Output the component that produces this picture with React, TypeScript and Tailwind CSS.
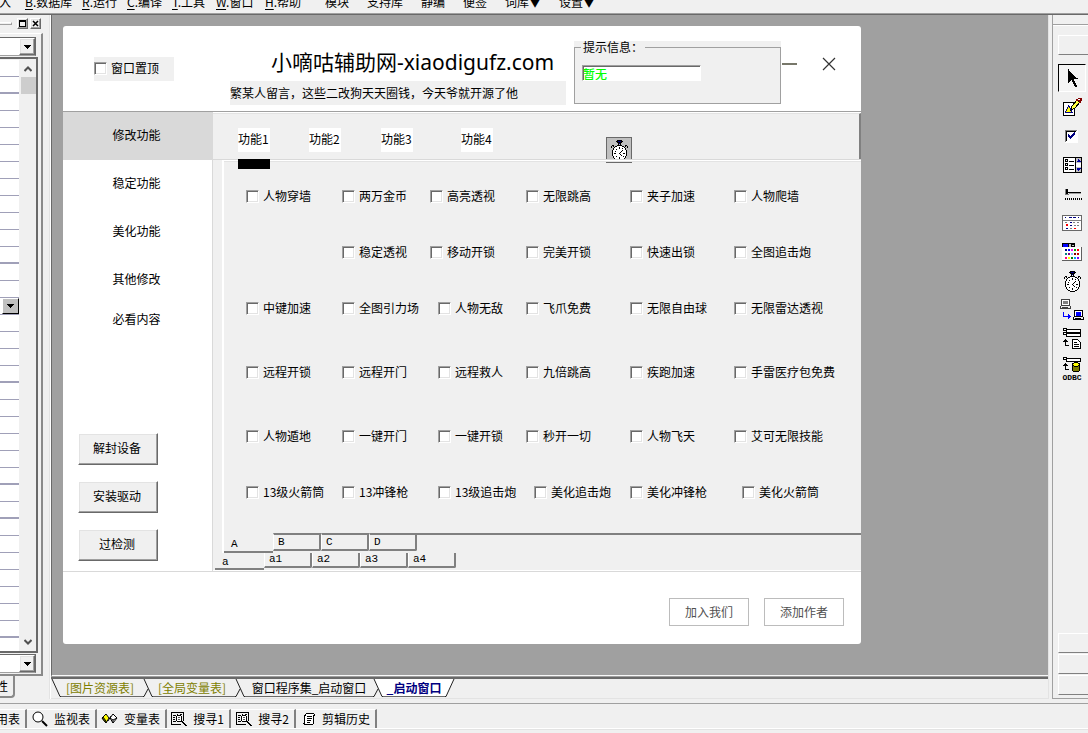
import React, { useState } from "react";

const RAISED =
  "border border-t-white border-l-white border-b-[#696969] border-r-[#696969] shadow-[inset_-1px_-1px_#a0a0a0,inset_1px_1px_#e3e3e3]";

/* ---------- menu ---------- */

const MENU = [
  { key: "I", label: "插入", width: "w-[45px]" },
  { key: "B", label: "数据库", width: "w-[57px]" },
  { key: "R", label: "运行", width: "w-[45px]" },
  { key: "C", label: "编译", width: "w-[45px]" },
  { key: "T", label: "工具", width: "w-[44px]" },
  { key: "W", label: "窗口", width: "w-[49px]" },
  { key: "H", label: "帮助", width: "w-[60px]" },
  { key: "", label: "模块", width: "w-[42px]" },
  { key: "", label: "支持库", width: "w-[54px]" },
  { key: "", label: "静编", width: "w-[42px]" },
  { key: "", label: "便签", width: "w-[42px]" },
  { key: "", label: "词库▼", width: "w-[54px]" },
  { key: "", label: "设置▼", width: "w-[54px]" },
];

function MenuBar() {
  return (
    <nav className="flex h-[15px] shrink-0 items-end overflow-hidden border-b border-[#696969] shadow-[inset_0_-1px_#a0a0a0]">
      <div className="-ml-5 flex pb-1">
        {MENU.map((m) => (
          <button key={m.label} type="button" className={`shrink-0 whitespace-nowrap text-left leading-4 ${m.width}`}>
            {m.key && (
              <>
                <span className="underline underline-offset-2">{m.key}</span>.
              </>
            )}
            {m.label}
          </button>
        ))}
      </div>
    </nav>
  );
}

/* ---------- property panel ---------- */

function DownArrow() {
  return (
    <svg width="7" height="4" viewBox="0 0 7 4" shapeRendering="crispEdges" aria-hidden="true">
      <path d="M0 0h7v1H0zM1 1h5v1H1zM2 2h3v1H2zM3 3h1v1H3z" />
    </svg>
  );
}

function Combo({ label }: { label: string }) {
  return (
    <div className="flex h-[19px] justify-end border-y border-r border-t-[#696969] border-r-[#696969] border-b-[#a0a0a0] bg-white">
      <button type="button" aria-label={label} className={`grid w-4 place-items-center bg-[#f0f0f0] ${RAISED}`}>
        <DownArrow />
      </button>
    </div>
  );
}

const THICK_ROWS = [1, 11, 18, 24, 26, 33];
const ROWS = Array.from({ length: 34 }, (_, i) => i);

function PropertyPanel() {
  return (
    <aside className="flex w-[50px] shrink-0 flex-col border-r border-[#e3e3e3] pr-[6px]">
      <div className="flex h-[18px] items-center justify-end gap-[2px] pr-[2px] pb-px">
        <span className="mr-[3px] h-[3px] flex-1 border border-l-0 border-t-white border-r-[#a0a0a0] border-b-[#a0a0a0]" />
        <button type="button" aria-label="最大化" className={`grid size-[11px] place-items-center ${RAISED}`}>
          <svg width="7" height="7" viewBox="0 0 7 7" shapeRendering="crispEdges" aria-hidden="true">
            <path fillRule="evenodd" d="M0 0h7v7H0zM1 2h5v4H1z" />
          </svg>
        </button>
        <button type="button" aria-label="关闭面板" className={`grid size-[11px] place-items-center ${RAISED}`}>
          <svg width="7" height="7" viewBox="0 0 7 7" aria-hidden="true">
            <path d="M1 1l5 5M6 1L1 6" stroke="black" strokeWidth="1.5" />
          </svg>
        </button>
      </div>
      <div className="flex flex-1 flex-col border-r-2 border-b-2 border-[#8a8a8a] border-t border-t-white pt-[3px] pr-[5px] pb-[1px]">
        <Combo label="选择组件" />
        <div className="mt-[1px] -mr-[2px] flex flex-1 border-t-2 border-r-2 border-b-2 border-[#696969] bg-[#f0f0f0] pt-[1px]">
          <div className="w-[19px] bg-white">
            {ROWS.map((i) => (
              <div
                key={i}
                className={`flex h-[17px] justify-end border-[#a0a0b8] ${THICK_ROWS.includes(i) ? "border-b-2" : "border-b"}`}
              >
                {i === 14 && (
                  <button
                    type="button"
                    aria-label="展开属性"
                    className="grid w-[17px] place-items-center border border-t-white border-l-white border-r-black border-b-black bg-[#c0c0c0]"
                  >
                    <DownArrow />
                  </button>
                )}
              </div>
            ))}
          </div>
          <div className="ml-[1px] flex flex-1 flex-col items-center justify-between">
            <div className="flex w-full flex-col items-center">
              <svg className="h-[17px]" width="8" viewBox="0 0 8 17" fill="none" stroke="#505050" strokeWidth="2" aria-hidden="true">
                <path d="M0.5 11L4 7.5 7.5 11" />
              </svg>
              <span className="h-[17px] w-[15px] bg-[#cdcdcd]" />
            </div>
            <svg className="h-[17px]" width="8" viewBox="0 0 8 17" fill="none" stroke="#505050" strokeWidth="2" aria-hidden="true">
              <path d="M0.5 6L4 9.5 7.5 6" />
            </svg>
          </div>
        </div>
        <div className="mt-[1px]">
          <Combo label="选择事件" />
        </div>
      </div>
      <div className="h-[23px]">
        <button
          type="button"
          className="h-[22px] w-[15px] overflow-hidden rounded-br-sm border-r-2 border-b-2 border-[#8a8a8a]"
        >
          <span className="-ml-[28px] block w-9 whitespace-nowrap text-right">属性</span>
        </button>
      </div>
    </aside>
  );
}

/* ---------- form being designed ---------- */

function Check({ label }: { label: string }) {
  return (
    <label className="flex h-6 items-center gap-1 whitespace-nowrap">
      <input
        type="checkbox"
        className="size-[13px] shrink-0 appearance-none border border-t-[#a0a0a0] border-l-[#a0a0a0] border-r-white border-b-white bg-white shadow-[inset_1px_1px_#696969,inset_-1px_-1px_#e3e3e3] checked:bg-[#000080]"
      />
      {label}
    </label>
  );
}

function Stopwatch() {
  return (
    <g>
      <path d="M10 4h5v1h-5zM9 5h2v1H9zM14 5h2v1h-2zM10 6h5v1h-5zM11 7h1v2h-1zM13 7h1v2h-1z" fill="#000" />
      <path d="M11 5h3v1h-3zM12 7h1v1h-1z" fill="#000080" />
      <path d="M5 9h2v1H5zM4 10h1v2H4zM6 10h1v1H6zM18 9h2v1h-2zM20 10h1v2h-1zM18 10h1v1h-1z" fill="#000" />
      <path d="M10 9h5v1h2v1h1v1h1v2h1v6h-1v2h-1v1h-1v1h-2v1h-5v-1H8v-1H7v-1H6v-2H5v-6h1v-2h1v-1h1v-1h2z" fill="#000" />
      <path d="M10 10h5v1h2v1h1v2h1v6h-1v2h-1v1h-2v1h-5v-1H8v-1H7v-2H6v-6h1v-2h1v-1h2z" fill="#fff" />
      <path d="M12 11h1v2h-1zM12 21h1v2h-1zM7 17h2v1H7zM16 17h2v1h-2zM9 13h1v1H9zM9 20h1v1H9zM16 20h1v1h-1zM8 15h1v1H8zM15 12h1v1h-1z" fill="#000" />
      <path d="M15 14h1v1h-1zM14 15h1v1h-1zM13 16h1v1h-1zM12 17h1v1h-1zM13 18h1v1h-1zM14 19h1v1h-1z" fill="#000" />
    </g>
  );
}

function FormHeader() {
  return (
    <header className="flex h-[86px] items-start border-b border-[#a0a0a0] pr-[25px] pl-[31px]">
      <div className="mt-[31px] w-20 bg-[#f0f0f0] pb-px">
        <div className="-mt-px">
          <Check label="窗口置顶" />
        </div>
      </div>
      <div className="mr-2 ml-14 min-w-0 flex-1 pt-5">
        <h1 className="h-[35px] whitespace-nowrap pl-[41px] font-['Noto_Sans','Noto_Sans_CJK_SC',sans-serif] text-[21px] leading-8">
          小嘀咕辅助网-xiaodigufz.com
        </h1>
        <p className="h-6 whitespace-nowrap bg-[#f0f0f0] leading-6">繁某人留言，这些二改狗天天圈钱，今天爷就开源了他</p>
      </div>
      <div className="mt-[15px] w-[207px] bg-[#f0f0f0]">
        <fieldset className="h-[63px] min-w-0 border border-[#a0a0a0] px-[7px]">
          <legend className="-ml-[1px] h-3 px-[2px] leading-3">提示信息：</legend>
          <input
            type="text"
            aria-label="提示信息"
            defaultValue="暂无"
            className="mt-3 block h-4 w-[119px] border border-t-[#a0a0a0] border-l-[#a0a0a0] border-r-white border-b-white bg-white leading-3 font-medium text-[#00ff00] shadow-[inset_1px_1px_#696969] outline-none"
          />
        </fieldset>
      </div>
      <button type="button" aria-label="最小化" className="mt-[26px] ml-px grid h-6 w-[15px] place-items-center">
        <span className="h-[2px] w-full bg-[#77776a]" />
      </button>
      <button type="button" aria-label="关闭" className="mt-[26px] ml-[25px] grid h-6 w-[14px] place-items-center">
        <svg width="14" height="14" viewBox="0 0 14 14" stroke="#333" strokeWidth="1.2" aria-hidden="true">
          <path d="M1 1l12 12M13 1L1 13" />
        </svg>
      </button>
    </header>
  );
}

const SIDE = [
  { label: "修改功能", height: "h-12" },
  { label: "稳定功能", height: "h-12" },
  { label: "美化功能", height: "h-12" },
  { label: "其他修改", height: "h-12" },
  { label: "必看内容", height: "h-8" },
];

function Sidebar() {
  const [active, setActive] = useState(0);
  return (
    <div className="flex w-[150px] shrink-0 flex-col border-r border-[#d9d9d9]">
      {SIDE.map((s, i) => (
        <button
          key={s.label}
          type="button"
          onClick={() => setActive(i)}
          className={`pr-0.5 pb-0.5 ${s.height} ${active === i ? "bg-[#d9d9d9]" : "bg-white"}`}
        >
          {s.label}
        </button>
      ))}
      <div className="mt-auto flex flex-col gap-4 pb-[10px] pl-[15px]">
        {["解封设备", "安装驱动", "过检测"].map((t) => (
          <button key={t} type="button" className={`h-8 w-20 bg-[#f0f0f0] pr-0.5 pb-0.5 ${RAISED}`}>
            {t}
          </button>
        ))}
      </div>
    </div>
  );
}

const TABS = [
  { label: "功能1", gap: "ml-[25px]" },
  { label: "功能2", gap: "ml-[39px]" },
  { label: "功能3", gap: "ml-10" },
  { label: "功能4", gap: "ml-12" },
];

type Item = { label: string; shifted?: boolean } | null;
const s = (label: string): Item => ({ label, shifted: true });
const n = (label: string): Item => ({ label });

const OPTIONS: { gap: string; items: Item[] }[] = [
  { gap: "", items: [n("人物穿墙"), n("两万金币"), n("高亮透视"), n("无限跳高"), n("夹子加速"), n("人物爬墙")] },
  { gap: "mt-8", items: [null, n("稳定透视"), n("移动开锁"), n("完美开锁"), n("快速出锁"), n("全图追击炮")] },
  { gap: "mt-8", items: [n("中键加速"), n("全图引力场"), s("人物无敌"), n("飞爪免费"), n("无限自由球"), n("无限雷达透视")] },
  { gap: "mt-10", items: [n("远程开锁"), n("远程开门"), s("远程救人"), n("九倍跳高"), n("疾跑加速"), n("手雷医疗包免费")] },
  { gap: "mt-10", items: [n("人物遁地"), n("一键开门"), s("一键开锁"), n("秒开一切"), n("人物飞天"), n("艾可无限技能")] },
  { gap: "mt-8", items: [n("13级火箭筒"), n("13冲锋枪"), s("13级追击炮"), s("美化追击炮"), n("美化冲锋枪"), s("美化火箭筒")] },
];

function PageTabs({ labels, fill }: { labels: string[]; fill?: boolean }) {
  return (
    <div className="flex items-start font-['Liberation_Mono','Noto_Sans_CJK_SC',monospace] text-[11px]">
      {labels.map((l, i) =>
        i === 0 ? (
          <button
            key={l}
            type="button"
            className={`w-[49px] border-b-2 border-[#808080] pl-[7px] text-left leading-4 ${fill ? "h-[20px] pt-[3px]" : "h-[17px] pt-[1px]"}`}
          >
            {l}
          </button>
        ) : (
          <button
            key={l}
            type="button"
            className={`w-12 rounded-br-[2px] border-r-2 border-b-2 border-l border-[#808080] border-l-white pl-1 text-left ${fill ? "h-[18px] border-t-2 leading-[15px]" : "h-[15px] leading-[13px]"}`}
          >
            {l}
          </button>
        ),
      )}
      {fill && <span className="flex-1 border-t-2 border-[#808080]" />}
    </div>
  );
}

function FormBody() {
  const [tab, setTab] = useState(0);
  return (
    <div className="flex">
      <Sidebar />
      <div className="flex min-w-0 flex-1 flex-col border-t border-white bg-[#f0f0f0]">
        <div className="flex h-[46px] items-start border-t border-r-2 border-[#e3e3e3] border-r-[#808080]">
          {TABS.map((t, i) => (
            <button
              key={t.label}
              type="button"
              onClick={() => setTab(i)}
              className={`relative mt-[14px] h-6 w-8 shrink-0 whitespace-nowrap bg-white pb-0.5 text-left ${t.gap}`}
            >
              {t.label}
              {tab === i && <span className="absolute top-[31px] left-0 h-[10px] w-8 bg-black" />}
            </button>
          ))}
          <span className="mt-[23px] ml-[113px] block size-[26px] shrink-0 border border-[#696969] bg-[#c0c0c0]">
            <svg width="24" height="24" viewBox="0 2 24 24" shapeRendering="crispEdges" role="img" aria-label="时钟">
              <Stopwatch />
            </svg>
          </span>
        </div>
        <div className="flex flex-col border-t border-[#d9d9d9] pl-[9px]">
          <div className="border-t border-l-2 border-white">
            <div className="h-[372px] border-t border-[#e3e3e3] pt-[22px] pl-[22px]">
              {OPTIONS.map((row, r) => (
                <div key={r} className={`grid grid-cols-[96px_88px_96px_104px_104px_1fr] ${row.gap}`}>
                  {row.items.map((it, c) => (
                    <div key={c} className={it && it.shifted ? "pl-2" : ""}>
                      {it && <Check label={it.label} />}
                    </div>
                  ))}
                </div>
              ))}
            </div>
            <PageTabs labels={["A", "B", "C", "D"]} fill />
          </div>
        </div>
        <div className="border-b border-white pl-[2px]">
          <PageTabs labels={["a", "a1", "a2", "a3", "a4"]} />
        </div>
      </div>
    </div>
  );
}

function DesignedForm() {
  return (
    <section className="w-full max-w-[798px] overflow-hidden rounded-[3px] bg-white">
      <FormHeader />
      <FormBody />
      <footer className="flex justify-end gap-[15px] border-t border-[#d9d9d9] pt-[26px] pr-[17px] pb-[18px]">
        {["加入我们", "添加作者"].map((t) => (
          <button key={t} type="button" className="h-7 w-20 border border-[#bcbcbc] bg-white text-[#505050]">
            {t}
          </button>
        ))}
      </footer>
    </section>
  );
}

/* ---------- document tabs ---------- */

function Slant({ fill, joined }: { fill: string; joined: boolean }) {
  return (
    <svg width="10" height="18" viewBox="0 0 10 18" className="shrink-0" fill="none" aria-hidden="true">
      <path d="M1 0L9 17.5H10V0z" fill={fill} />
      {joined && <path d="M5 10L1 17.5H0" stroke="#222" />}
      <path d="M1 0L9 17.5h1" stroke="#222" />
    </svg>
  );
}

const DOCS = [
  { label: "[图片资源表]", style: "w-[82px] pr-1 text-[#808000]" },
  { label: "[全局变量表]", style: "w-[82px] pr-1 text-[#808000]" },
  { label: "窗口程序集_启动窗口", style: "w-[128px] text-black" },
  { label: "_启动窗口", style: "w-[62px] bg-white font-bold text-[#000080]" },
];

function DocTabs() {
  return (
    <div className="flex h-[22px] items-start border-t-2 border-b border-[#696969] border-b-[#e3e3e3] shadow-[0_-1px_#a0a0a0]">
      {DOCS.map((d, i) => (
        <React.Fragment key={d.label}>
          <Slant fill={i === 3 ? "#fff" : "#f0f0f0"} joined={i > 0} />
          <button type="button" className={`h-[18px] border-b border-[#696969] text-center leading-4 whitespace-nowrap ${d.style}`}>
            {d.label}
          </button>
        </React.Fragment>
      ))}
      <svg width="10" height="18" viewBox="0 0 10 18" aria-hidden="true">
        <path d="M0 0H9L1 17.5H0z" fill="#fff" />
        <path d="M9 0L1 17.5H0" fill="none" stroke="#222" />
      </svg>
    </div>
  );
}

/* ---------- component toolbox ---------- */

const PALETTE = [
  "#000080", "#0000ff", "#ff00ff", "#00a000", "#ff0000",
  "#008080", "#800080", "#80c0ff", "#800000", "#c00000",
  "#ff0080", "#ffff00", "#008000", "#00a0ff", "#8000ff",
];

const TOOLS: { name: string; art: React.ReactNode }[] = [
  {
    name: "图片框",
    art: (
      <>
        <rect x="3.5" y="9.5" width="11" height="13" fill="#fff" stroke="#000" />
        <path d="M8.5 12.5l-3 7h7z" fill="#ffff00" stroke="#000080" />
        <path d="M11 17l1-4 5-6 3 2-5 6z" fill="#ffff40" stroke="#000" />
        <path d="M16 6h2V5h4v3h-1v2h-2V8h-3z" fill="#800000" />
        <path d="M18 6h2v1h-2z" fill="#fff" />
      </>
    ),
  },
  {
    name: "选择框",
    art: (
      <>
        <rect x="5" y="8" width="13" height="13" fill="#fff" />
        <path d="M5 8h12v1H6v11H5z" fill="#808080" />
        <path d="M6 9h10v1H7v9H6z" fill="#000" />
        <path d="M8 12h1v1h1v1h1v-1h1v-1h1v-1h1v-1h1v3h-1v1h-1v1h-1v1h-1v1h-1v-1H9v-1H8z" fill="#000080" />
      </>
    ),
  },
  {
    name: "列表框",
    art: (
      <>
        <rect x="3.5" y="6.5" width="18" height="15" fill="#fff" stroke="#000" />
        <path d="M15 6h1v16h-1zM9 10h5v1H9zM9 14h5v1H9zM9 18h5v1H9z" />
        <path fillRule="evenodd" d="M5 8h3v3H5zM6 9h1v1H6zM5 12h3v3H5zM6 13h1v1H6zM5 16h3v3H5zM6 17h1v1H6z" />
        <path d="M16 7h5v5h-5zM16 16h5v5h-5z" fill="#c0c0c0" />
        <path d="M18 8h1v1h1v1h1v1h-4v-1h1zM17 17h4v1h-1v1h-1v1h-1v-1h-1z" fill="#0000a0" />
      </>
    ),
  },
  {
    name: "滑块条",
    art: (
      <>
        <path d="M8 12h13v1H8zM6 9h2v6H6z" />
        <path d="M5 9h1v6H5zM5 14h4v1H5z" fill="#808080" />
        <path d="M9 13h12v1H9z" fill="#a0a0a0" />
        <path d="M5 18h1v2H5zM7 18h1v2H7zM9 18h1v2H9zM11 18h1v2h-1zM13 18h1v2h-1zM15 18h1v2h-1zM17 18h1v2h-1zM19 18h1v2h-1zM21 18h1v2h-1z" />
      </>
    ),
  },
  {
    name: "月历",
    art: (
      <>
        <rect x="2.5" y="6.5" width="19" height="15" fill="#fff" stroke="#696969" />
        <path d="M3 11h18v1H3z" fill="#808080" />
        <path d="M5 8h1v1H5zM9 8h3v1H9zM13 8h3v1h-3zM18 8h1v1h-1zM10 13h2v1h-2zM6 19h2v1H6zM10 16h2v1h-2z" fill="#000080" />
        <path d="M6 15h2v2H6zM14 19h2v1h-2z" fill="#ff0000" />
        <path d="M13 13h2v1h-2zM17 13h2v1h-2zM14 16h2v1h-2zM17 16h2v1h-2zM10 19h2v1h-2zM5 13h2v1H5z" fill="#808080" />
      </>
    ),
  },
  {
    name: "颜色选择器",
    art: (
      <>
        <path d="M2 5h13v5H2z" />
        <path d="M3 6h5v3H3z" fill="#0000ff" />
        <path d="M9 6h2v3H9zM12 7h2v1h-2z" fill="#c0c0c0" />
        <rect x="2" y="9" width="20" height="14" fill="#fff" />
        <path d="M21 9h1v14H2v-1h19z" fill="#606060" />
        {PALETTE.map((c, i) => (
          <rect key={c} x={5 + (i % 5) * 3} y={11 + Math.floor(i / 5) * 4} width="2" height="2" fill={c} />
        ))}
      </>
    ),
  },
  { name: "时钟", art: <Stopwatch /> },
  {
    name: "网络传送",
    art: (
      <>
        <path d="M1 3h9v7H1zM0 10h11v3H0z" fill="#404040" />
        <path d="M2 4h7v5H2z" fill="#fff" />
        <path d="M3 5h5v3H3z" fill="#808080" />
        <path d="M1 10h9v2H1z" fill="#f0f0f0" />
        <path d="M2 11h6v1H2z" fill="#404040" />
        <path d="M3 16h1v4h4v-2h1v1h1v1h1v1h-1v1H9v1H8v-2H3z" fill="#0000ff" />
        <path d="M14 14h9v7h-9zM13 21h11v3H13z" />
        <path d="M15 15h7v5h-7z" fill="#fff" />
        <path d="M16 16h5v4h-5z" fill="#0000ff" />
        <path d="M14 21h9v2h-9z" fill="#f0f0f0" />
        <path d="M15 22h6v1h-6z" />
      </>
    ),
  },
  {
    name: "数据源",
    art: (
      <>
        <path d="M3 3h4v1h14v4H6V6H3zM3 7h4v1h14v4H6v-2H3z" />
        <path d="M4 4h2v1H4zM7 5h13v2H7zM4 8h2v1H4zM7 9h13v2H7z" fill="#fff" />
        <path d="M5 14h1v1h1v1h1v1H6v3h3v1H5v-4H3v-1h1v-1h1z" />
        <path d="M12.5 14.5h5l3 3v6h-8z" fill="#fff" stroke="#000" />
        <path d="M14 17h3v1h-3zM14 19h5v1h-5zM14 21h5v1h-5z" />
      </>
    ),
  },
  {
    name: "外部数据库",
    art: (
      <>
        <path d="M3 3h4v1h14v4H6V6H3z" />
        <path d="M4 4h2v1H4zM7 5h13v2H7z" fill="#fff" />
        <path d="M5 9h1v1h1v1h1v1H6v3h3v1H5v-4H3v-1h1v-1h1z" />
        <path d="M12.5 10.5v6q3.500 3 7 0v-6z" fill="#808000" stroke="#000" />
        <ellipse cx="16" cy="10.500" rx="3.500" ry="1.800" fill="#ffff00" stroke="#000" />
        <text x="12" y="26" textAnchor="middle" fontSize="8" fontWeight="bold" fontFamily="Liberation Mono, monospace">
          ODBC
        </text>
      </>
    ),
  },
];

const BLANK = "h-[20px] border-t border-l border-b border-t-white border-l-white border-b-[#808080]";

function Toolbox() {
  return (
    <aside className="flex w-[40px] shrink-0 flex-col border-l border-[#e3e3e3] pl-[3px]">
      <div className="flex flex-1 flex-col border-l border-b border-[#a0a0a0]">
        <div className="h-[10px] border-b border-[#a0a0a0]" />
        <div className="flex flex-1 flex-col border-t border-white pt-[9px] pl-[5px]">
          <div className={BLANK} />
          <button
            type="button"
            aria-label="选择"
            className="mt-[9px] mb-px grid h-[28px] w-[28px] place-items-center border border-t-black border-l-black border-r-white border-b-white bg-[#f4f4f4] pl-px"
          >
            <svg width="12" height="19" viewBox="0 0 12 19" shapeRendering="crispEdges" aria-hidden="true">
              <path d="M1 0v14h1v-1h1v-1h1v-1h1v2h1v2h1v2h1v1h2v-2H9v-2H8v-2H7v-2h4v-1h-1V9H9V8H8V7H7V6H6V5H5V4H4V3H3V2H2V0z" />
            </svg>
          </button>
          {TOOLS.map((t) => (
            <button key={t.name} type="button" aria-label={t.name} className="h-[29px] w-7 pl-[2px]">
              <svg width="24" height="29" viewBox="0 0 24 29" shapeRendering="crispEdges" aria-hidden="true">
                {t.art}
              </svg>
            </button>
          ))}
          <div className="mt-auto flex flex-col gap-px pb-[3px]">
            <div className={BLANK} />
            <div className={BLANK} />
            <div className={BLANK} />
          </div>
        </div>
      </div>
    </aside>
  );
}

/* ---------- status tabs ---------- */

const FIND_ICON = (
  <svg width="16" height="16" viewBox="0 0 16 16" shapeRendering="crispEdges" aria-hidden="true">
    <path d="M0 1h13v9h-1V2H1v11h9v1H0z" />
    <path d="M2 4h3v1H2zM2 6h2v1H2zM2 8h2v1H2zM2 10h3v1H2zM6 3h1v1H6zM9 3h2v1H9z" />
    <path d="M6 4h4v1h1v5h-1v1H6v-1H5V5h1z" />
    <path d="M6 5h4v5H6z" fill="#fff" />
    <path d="M7 6h2v1H7zM7 8h2v1H7z" fill="#555" />
    <path d="M10 10h2v1h1v1h1v1h1v1h1v1h-2v-1h-1v-1h-1v-1h-1v-1h-1z" />
  </svg>
);

const STATUS = [
  { label: "调用表", width: "w-[27px]", icon: null },
  {
    label: "监视表",
    width: "w-[70px]",
    icon: (
      <svg width="16" height="16" viewBox="0 0 16 16" fill="none" stroke="#000" aria-hidden="true">
        <circle cx="6" cy="6" r="5" fill="#fff" />
        <path d="M10 10l5 5" strokeWidth="2" />
      </svg>
    ),
  },
  {
    label: "变量表",
    width: "w-[70px]",
    icon: (
      <svg width="17" height="16" viewBox="0 0 17 16" stroke="#000" aria-hidden="true">
        <path d="M1 7l4-4 3 4-3 5z" fill="#ffff00" />
        <path d="M1 7l4 5v-2L2 6z" fill="#808000" />
        <path d="M9 7l3-4 4 4-4 5z" fill="#fff" />
        <path d="M9 7l3 2 4-2M12 9v3M7 10l3-5" fill="none" />
      </svg>
    ),
  },
  { label: "搜寻1", width: "w-[64px]", icon: FIND_ICON },
  { label: "搜寻2", width: "w-[65px]", icon: FIND_ICON },
  {
    label: "剪辑历史",
    width: "w-[81px]",
    icon: (
      <svg width="13" height="16" viewBox="0 0 13 16" shapeRendering="crispEdges" aria-hidden="true">
        <path d="M3 2h8v1h1v2h-1v8h-1v1H1v-1H0v-1h1V4h1V3h1z" />
        <path d="M3 3h8v1h-1v9H2V5h1z" fill="#fff" />
        <path d="M4 5h5v1H4zM4 7h5v1H4zM4 9h4v1H4zM4 11h3v1H4z" />
      </svg>
    ),
  },
];

function StatusTabs() {
  return (
    <footer className="mt-[4px] flex h-[30px] shrink-0 flex-col border-t border-[#a0a0a0] pt-[5px]">
      <div className="flex border-b border-white">
        {STATUS.map((t) => (
          <button
            key={t.label}
            type="button"
            className={`flex h-[19px] shrink-0 items-center justify-end gap-[6px] whitespace-nowrap border-t border-r-2 border-t-white border-r-[#808080] pr-[5px] leading-[18px] ${t.width}`}
          >
            {t.icon}
            {t.label}
          </button>
        ))}
      </div>
      <div className="border-t border-[#e3e3e3]" />
    </footer>
  );
}

export default function App() {
  return (
    <div className="flex min-h-screen flex-col overflow-hidden bg-[#f0f0f0] font-['Noto_Sans_CJK_SC',sans-serif] text-xs text-black">
      <MenuBar />
      <main className="flex flex-1">
        <PropertyPanel />
        <div className="flex min-w-0 flex-1 flex-col border-l border-white">
          <div className="flex-1 border-b-2 border-l border-[#696969] border-b-[#f8f8f8] bg-[#a0a0a0] pt-[11px] pl-[11px]">
            <DesignedForm />
          </div>
          <DocTabs />
        </div>
        <Toolbox />
      </main>
      <StatusTabs />
    </div>
  );
}
